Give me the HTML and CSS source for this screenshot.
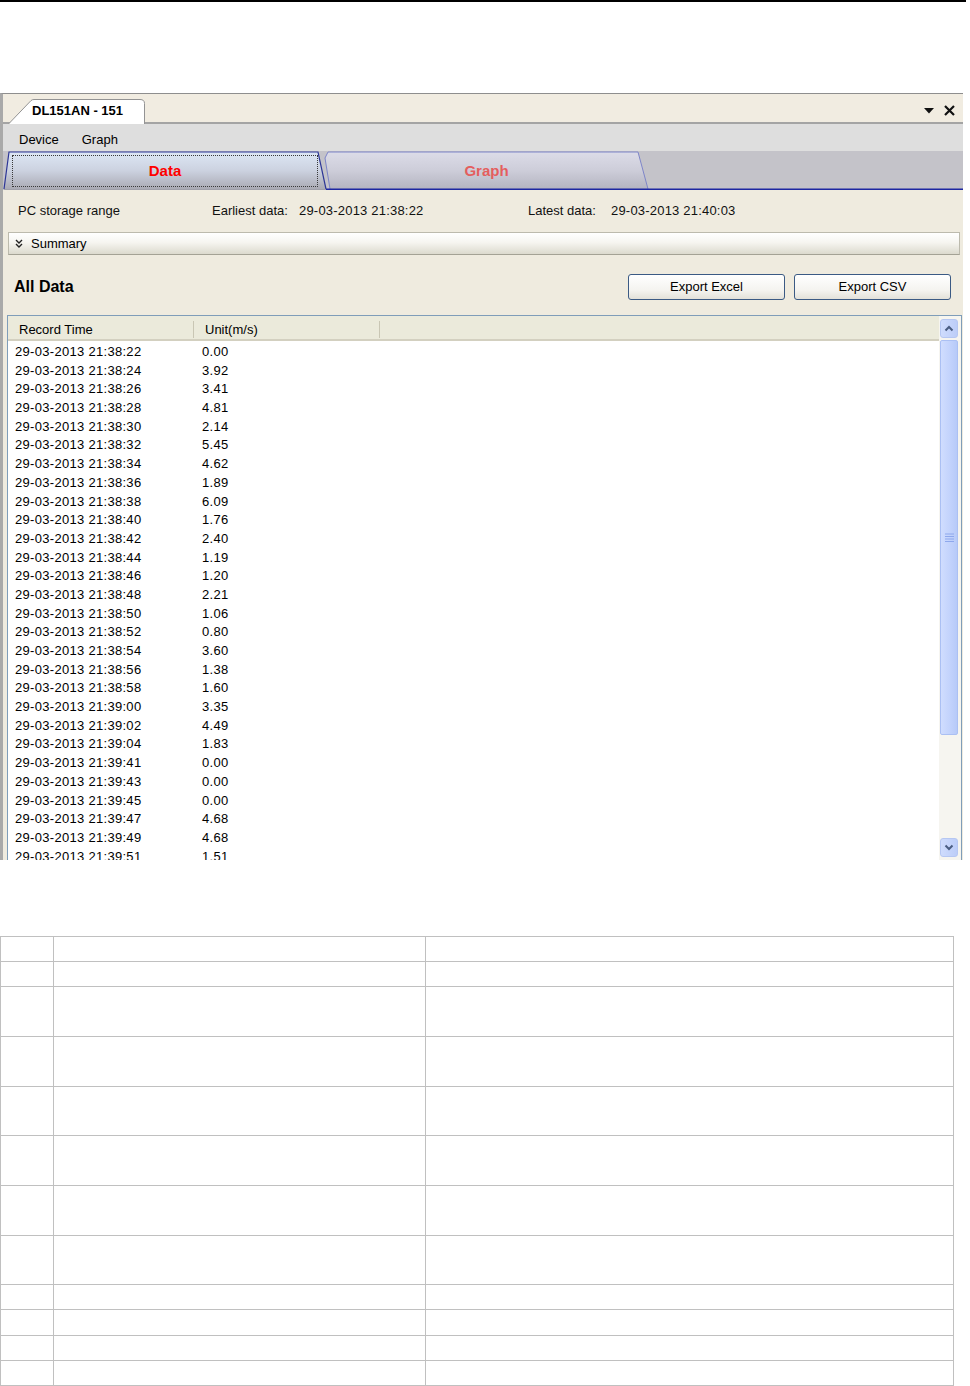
FILE: index.html
```html
<!DOCTYPE html>
<html>
<head>
<meta charset="utf-8">
<title>DL151AN - 151</title>
<link rel="stylesheet" href="styles.css">
</head>
<body>
<div class="topline"></div>

<div class="window">
  <div class="titlebar">
    <div class="doc-tab">
      <svg class="doc-tab-shape" width="137" height="25" viewBox="0 0 137 25">
        <path d="M0.5,25 L23,1.6 Q24,0.5 26,0.5 L132,0.5 Q136.5,0.5 136.5,4.5 L136.5,25" fill="#ffffff" stroke="#939393" stroke-width="1"/>
      </svg>
      <span class="doc-tab-label">DL151AN - 151</span>
    </div>
    <div class="title-controls">
      <svg width="10" height="6" viewBox="0 0 10 6"><polygon points="0,0 10,0 5,5.5" fill="#111"/></svg>
      <svg width="11" height="11" viewBox="0 0 11 11"><path d="M1,1 L10,10 M10,1 L1,10" stroke="#111" stroke-width="2.2" fill="none"/></svg>
    </div>
  </div>

  <div class="menubar">
    <span>Device</span>
    <span>Graph</span>
  </div>

  <div class="tabstrip">
    <svg class="tabstrip-shapes" width="960" height="39" viewBox="0 0 960 39">
      <defs>
        <linearGradient id="gData" x1="0" y1="0" x2="0" y2="1">
          <stop offset="0" stop-color="#dde7f5"/>
          <stop offset="0.5" stop-color="#ccd2e0"/>
          <stop offset="1" stop-color="#aaaab4"/>
        </linearGradient>
        <linearGradient id="gGraph" x1="0" y1="0" x2="0" y2="1">
          <stop offset="0" stop-color="#dcdce8"/>
          <stop offset="0.5" stop-color="#cdcdd9"/>
          <stop offset="1" stop-color="#b4b4c0"/>
        </linearGradient>
      </defs>
      <path d="M327,38 L322,7 L325,1 L635,1 L645,38 Z" fill="url(#gGraph)"/>
      <path d="M327,38 L322,7 L325,1 L635,1 L645,38" fill="none" stroke="#7e85c8" stroke-width="1"/>
      <path d="M1,38 L6,1 L315,1 L323,38 Z" fill="url(#gData)"/>
      <path d="M1,38 L6,1 L315,1 L323,38" fill="none" stroke="#2d3696" stroke-width="1.2"/>
      <line x1="1" y1="38.5" x2="323" y2="38.5" stroke="#a0a0aa" stroke-width="1"/>
      <line x1="323" y1="38.3" x2="960" y2="38.3" stroke="#1d27a2" stroke-width="1.5"/>
    </svg>
    <div class="tab tab-data"><span class="tab-focus">Data</span></div>
    <div class="tab tab-graph">Graph</div>
  </div>

  <div class="content">
    <div class="range-row">
      <span class="rc rc-1">PC storage range</span>
      <span class="rc rc-2">Earliest data:</span>
      <span class="rc rc-3 val">29-03-2013 21:38:22</span>
      <span class="rc rc-4">Latest data:</span>
      <span class="rc val">29-03-2013 21:40:03</span>
    </div>

    <div class="summary">
      <svg class="summary-icon" width="8" height="9" viewBox="0 0 8 9"><path d="M1,1 L4,4 L7,1 M1,5 L4,8 L7,5" fill="none" stroke="#222" stroke-width="1.4"/></svg>
      <span>Summary</span>
    </div>

    <div class="alldata-row">
      <span class="alldata-title">All Data</span>
      <button class="btn">Export Excel</button>
      <button class="btn">Export CSV</button>
    </div>

    <div class="listview">
      <div class="list-main">
        <div class="list-header">
          <span class="hcell hcell-1">Record Time</span>
          <span class="hcell hcell-2">Unit(m/s)</span>
        </div>
        <div class="list-rows">
          <div class="row"><span class="c-time">29-03-2013 21:38:22</span><span class="c-val">0.00</span></div>
          <div class="row"><span class="c-time">29-03-2013 21:38:24</span><span class="c-val">3.92</span></div>
          <div class="row"><span class="c-time">29-03-2013 21:38:26</span><span class="c-val">3.41</span></div>
          <div class="row"><span class="c-time">29-03-2013 21:38:28</span><span class="c-val">4.81</span></div>
          <div class="row"><span class="c-time">29-03-2013 21:38:30</span><span class="c-val">2.14</span></div>
          <div class="row"><span class="c-time">29-03-2013 21:38:32</span><span class="c-val">5.45</span></div>
          <div class="row"><span class="c-time">29-03-2013 21:38:34</span><span class="c-val">4.62</span></div>
          <div class="row"><span class="c-time">29-03-2013 21:38:36</span><span class="c-val">1.89</span></div>
          <div class="row"><span class="c-time">29-03-2013 21:38:38</span><span class="c-val">6.09</span></div>
          <div class="row"><span class="c-time">29-03-2013 21:38:40</span><span class="c-val">1.76</span></div>
          <div class="row"><span class="c-time">29-03-2013 21:38:42</span><span class="c-val">2.40</span></div>
          <div class="row"><span class="c-time">29-03-2013 21:38:44</span><span class="c-val">1.19</span></div>
          <div class="row"><span class="c-time">29-03-2013 21:38:46</span><span class="c-val">1.20</span></div>
          <div class="row"><span class="c-time">29-03-2013 21:38:48</span><span class="c-val">2.21</span></div>
          <div class="row"><span class="c-time">29-03-2013 21:38:50</span><span class="c-val">1.06</span></div>
          <div class="row"><span class="c-time">29-03-2013 21:38:52</span><span class="c-val">0.80</span></div>
          <div class="row"><span class="c-time">29-03-2013 21:38:54</span><span class="c-val">3.60</span></div>
          <div class="row"><span class="c-time">29-03-2013 21:38:56</span><span class="c-val">1.38</span></div>
          <div class="row"><span class="c-time">29-03-2013 21:38:58</span><span class="c-val">1.60</span></div>
          <div class="row"><span class="c-time">29-03-2013 21:39:00</span><span class="c-val">3.35</span></div>
          <div class="row"><span class="c-time">29-03-2013 21:39:02</span><span class="c-val">4.49</span></div>
          <div class="row"><span class="c-time">29-03-2013 21:39:04</span><span class="c-val">1.83</span></div>
          <div class="row"><span class="c-time">29-03-2013 21:39:41</span><span class="c-val">0.00</span></div>
          <div class="row"><span class="c-time">29-03-2013 21:39:43</span><span class="c-val">0.00</span></div>
          <div class="row"><span class="c-time">29-03-2013 21:39:45</span><span class="c-val">0.00</span></div>
          <div class="row"><span class="c-time">29-03-2013 21:39:47</span><span class="c-val">4.68</span></div>
          <div class="row"><span class="c-time">29-03-2013 21:39:49</span><span class="c-val">4.68</span></div>
          <div class="row"><span class="c-time">29-03-2013 21:39:51</span><span class="c-val">1.51</span></div>
        </div>
      </div>
      <div class="scrollbar">
        <div class="sb-btn">
          <svg width="10" height="7" viewBox="0 0 10 7"><path d="M1.5,5.5 L5,2 L8.5,5.5" fill="none" stroke="#4a5d82" stroke-width="2"/></svg>
        </div>
        <div class="sb-thumb">
          <svg width="9" height="9" viewBox="0 0 9 9">
            <path d="M0,1 H9 M0,3.5 H9 M0,6 H9 M0,8.5 H9" stroke="#8ea8ec" stroke-width="1"/>
          </svg>
        </div>
        <div class="sb-track"></div>
        <div class="sb-btn">
          <svg width="10" height="7" viewBox="0 0 10 7"><path d="M1.5,1.5 L5,5 L8.5,1.5" fill="none" stroke="#4a5d82" stroke-width="2"/></svg>
        </div>
      </div>
    </div>
  </div>
</div>

<table class="doc-table">
  <colgroup>
    <col class="col-1">
    <col class="col-2">
    <col class="col-3">
  </colgroup>
  <tr class="r-s"><td></td><td></td><td></td></tr>
  <tr class="r-s"><td></td><td></td><td></td></tr>
  <tr class="r-d"><td></td><td></td><td></td></tr>
  <tr class="r-d"><td></td><td></td><td></td></tr>
  <tr class="r-d2"><td></td><td></td><td></td></tr>
  <tr class="r-d"><td></td><td></td><td></td></tr>
  <tr class="r-d"><td></td><td></td><td></td></tr>
  <tr class="r-d2"><td></td><td></td><td></td></tr>
  <tr class="r-s"><td></td><td></td><td></td></tr>
  <tr class="r-s2"><td></td><td></td><td></td></tr>
  <tr class="r-s"><td></td><td></td><td></td></tr>
  <tr class="r-s"><td></td><td></td><td></td></tr>
</table>
</body>
</html>
```

FILE: styles.css
```css
* {
  box-sizing: border-box;
}

body {
  margin: 0;
  background: #ffffff;
  font-family: "Liberation Sans", Arial, sans-serif;
  font-size: 13px;
  color: #000000;
}

.topline {
  width: 966px;
  height: 2px;
  background: #000000;
}

/* ---------- window ---------- */
.window {
  margin-top: 91px;
  width: 963px;
  height: 767px;
  overflow: hidden;
  border-top: 1px solid #8e8e8e;
  border-left: 3px solid #a9a9a9;
  background: #efebdf;
}

.titlebar {
  height: 30px;
  background: #f1ece1;
  border-bottom: 2px solid #a4a4a4;
  display: flex;
  align-items: flex-start;
}

.doc-tab {
  position: relative;
  margin-left: 5px;
  margin-top: 5px;
  width: 137px;
  height: 25px;
  flex: none;
}

.doc-tab-shape {
  position: absolute;
  left: 0;
  top: 0;
}

.doc-tab-label {
  position: relative;
  display: block;
  padding-left: 24px;
  line-height: 24px;
  font-weight: bold;
  font-size: 13px;
  color: #000;
}

.title-controls {
  margin-left: auto;
  margin-top: 11px;
  margin-right: 8px;
  display: flex;
  align-items: center;
  gap: 10px;
}

.title-controls svg {
  display: block;
}

.menubar {
  height: 27px;
  padding-top: 4px;
  padding-left: 16px;
  background: #dedede;
  display: flex;
  align-items: center;
  gap: 23px;
}

/* ---------- tabs ---------- */
.tabstrip {
  position: relative;
  height: 39px;
  background: #c4c3c9;
  display: flex;
  align-items: flex-start;
}

.tabstrip-shapes {
  position: absolute;
  left: 0;
  top: 0;
}

.tab {
  position: relative;
  height: 37px;
  margin-top: 1px;
  font-size: 15px;
  font-weight: bold;
}

.tab-data {
  margin-left: 2px;
  width: 320px;
  padding: 3px 7px 2px 7px;
  color: #ff0000;
}

.tab-focus {
  display: flex;
  height: 100%;
  align-items: center;
  justify-content: center;
  padding-bottom: 1px;
  border: 1px dotted #3a3a3a;
}

.tab-graph {
  width: 323px;
  display: flex;
  align-items: center;
  justify-content: center;
  color: #e45e5e;
}

/* ---------- content ---------- */
.range-row {
  height: 42px;
  padding-bottom: 2px;
  padding-left: 15px;
  display: flex;
  align-items: center;
  color: #111;
}

.rc-1 { width: 194px; }
.rc-2 { width: 87px; }
.rc-3 { width: 229px; }
.rc-4 { width: 83px; }

.val {
  letter-spacing: 0.2px;
}

.summary {
  margin-left: 5px;
  width: 952px;
  height: 23px;
  border: 1px solid #bcbaad;
  border-bottom-color: #a4a295;
  background: linear-gradient(#ffffff, #f6f5f0 45%, #dcdace);
  display: flex;
  align-items: center;
  padding-left: 6px;
  gap: 8px;
}

.summary-icon {
  display: block;
}

.alldata-row {
  height: 60px;
  padding: 3px 12px 0 11px;
  display: flex;
  align-items: center;
}

.alldata-title {
  font-size: 16px;
  font-weight: bold;
  margin-right: auto;
}

.btn {
  width: 157px;
  height: 26px;
  border: 1px solid #3b5a84;
  border-radius: 3px;
  background: linear-gradient(#ffffff, #f4f3ef 65%, #e3e1d9);
  font-family: inherit;
  font-size: 13px;
  color: #000;
  padding: 0;
  display: flex;
  align-items: center;
  justify-content: center;
}

.btn + .btn {
  margin-left: 9px;
}

/* ---------- list view ---------- */
.listview {
  margin-left: 4px;
  width: 955px;
  height: 560px;
  border: 1px solid #7f9db9;
  background: #ffffff;
  display: flex;
}

.list-main {
  flex: 1;
  overflow: hidden;
}

.list-header {
  height: 25px;
  padding-top: 5px;
  padding-bottom: 1px;
  background: #ebeadb;
  border-bottom: 2px solid #d3d0c0;
  display: flex;
}

.hcell {
  height: 17px;
  line-height: 17px;
  padding-left: 11px;
  border-right: 1px solid #c9c6b4;
}

.hcell-1 { width: 186px; }
.hcell-2 { width: 186px; }

.list-rows {
  padding-top: 2px;
}

.row {
  height: 18.7px;
  line-height: 18.7px;
  display: flex;
  letter-spacing: 0.3px;
}

.c-time {
  width: 187px;
  padding-left: 7px;
}

.c-val {
  padding-left: 7px;
}

.scrollbar {
  width: 22px;
  flex: none;
  background: #f6f5f0;
  padding-left: 1px;
  display: flex;
  flex-direction: column;
}

.sb-btn {
  width: 18px;
  height: 19px;
  margin-top: 3px;
  border: 1px solid #b6c7f2;
  border-radius: 3px;
  background: linear-gradient(90deg, #cfdcfd, #bccdf8);
  display: flex;
  align-items: center;
  justify-content: center;
}

.sb-btn + .sb-thumb {
  margin-top: 2px;
}

.sb-thumb {
  width: 18px;
  height: 395px;
  border: 1px solid #abc0f3;
  border-radius: 2px;
  background: linear-gradient(90deg, #d0ddfe, #c3d3fc 55%, #b7caf8);
  display: flex;
  align-items: center;
  justify-content: center;
}

.sb-track {
  height: 103px;
}

.sb-track + .sb-btn {
  margin-top: 0;
}

.sb-btn svg,
.sb-thumb svg {
  display: block;
}

/* ---------- document table ---------- */
.doc-table {
  margin-top: 76px;
  border-collapse: collapse;
  table-layout: fixed;
  width: 953px;
}

.col-1 { width: 53px; }
.col-2 { width: 372px; }
.col-3 { width: 528px; }

.doc-table td {
  border: 1px solid #c0c0c0;
  padding: 0;
}

.r-s { height: 25px; }
.r-s2 { height: 26px; }
.r-d { height: 50px; }
.r-d2 { height: 49px; }
```
